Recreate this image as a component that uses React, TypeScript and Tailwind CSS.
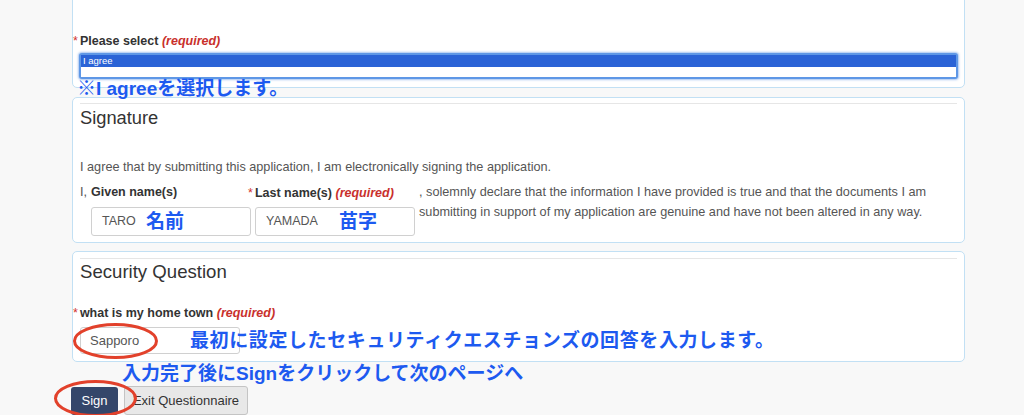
import React from "react";

const FONT = { fontFamily: '"Liberation Sans", Arial, "Noto Sans CJK JP", sans-serif' };
const JP = { fontFamily: '"Liberation Sans", Arial, "Noto Sans CJK JP", sans-serif' };

function Req({ text }: { text: string }) {
  return (
    <span className="text-[12.5px] leading-[16px] font-bold text-[#333]">
      <span className="-ml-[7px] mr-[2px] text-[#d2322d] font-normal">*</span>
      {text} <span className="italic text-[#c9302c]">(required)</span>
    </span>
  );
}

function Panel({ className, children }: { className: string; children: React.ReactNode }) {
  return (
    <div className={"border border-[#c2e0f4] rounded-[5px] bg-white px-[7px] " + className}>{children}</div>
  );
}

export default function App() {
  return (
    <div className="relative w-[1024px] h-[415px] overflow-hidden bg-[#f8f8f8]" style={FONT}>
      <div className="ml-[72px] w-[893px] flex flex-col">
        {/* Panel 1 */}
        <Panel className="-mt-[10px] pt-[41px] pb-[8px]">
          <div className="leading-[16px]">
            <Req text="Please select" />
          </div>
          <div className="mt-[4px] -ml-px -mr-px h-[26px] rounded-[3px] border-2 border-[#5e97e6] shadow-[0_0_2px_1px_rgba(80,140,230,0.5)] bg-white flex flex-col">
            <div className="h-[12px] bg-[#2a63d6] text-white text-[9.5px] leading-[12px] pl-[2px]">I agree</div>
            <div className="h-[10px] bg-white" />
          </div>
        </Panel>

        {/* Panel 2 */}
        <Panel className="mt-[9px] pt-[5px] pb-[6px]">
          <div className="h-px bg-[#e6e6e6]" />
          <div className="mt-[3px] text-[18.3px] leading-[22px] text-[#333]">Signature</div>
          <div className="mt-[30px] text-[12.7px] leading-[16px] text-[#555]">
            I agree that by submitting this application, I am electronically signing the application.
          </div>
          <div className="mt-[7px] flex items-start">
            <div className="w-[11px] text-[12.7px] leading-[20px] text-[#555]">I,</div>
            <div className="w-[160px] flex flex-col">
              <div className="text-[12.5px] leading-[20px] font-bold text-[#333]">Given name(s)</div>
              <div className="mt-[5px] h-[29px] border border-[#d0d0d0] rounded-[3px] pl-[10px] flex items-center text-[12.5px] text-[#555]">
                TARO
              </div>
            </div>
            <div className="ml-[4px] w-[160px] flex flex-col">
              <div className="leading-[20px]">
                <Req text="Last name(s)" />
              </div>
              <div className="mt-[5px] h-[29px] border border-[#d0d0d0] rounded-[3px] pl-[10px] flex items-center text-[12.5px] text-[#555]">
                YAMADA
              </div>
            </div>
            <div className="ml-[4px] text-[12.7px] leading-[20px] text-[#555] whitespace-nowrap">
              , solemnly declare that the information I have provided is true and that the documents I am
              <br />
              submitting in support of my application are genuine and have not been altered in any way.
            </div>
          </div>
        </Panel>

        {/* Panel 3 */}
        <Panel className="mt-[8px] pt-[6px] pb-[7px]">
          <div className="h-px bg-[#e6e6e6]" />
          <div className="mt-[2px] text-[18.6px] leading-[22px] text-[#333]">Security Question</div>
          <div className="mt-[21px] leading-[16px]">
            <Req text="what is my home town" />
          </div>
          <div className="mt-[6px] w-[160px] h-[27px] border border-[#d0d0d0] rounded-[3px] pl-[9px] flex items-center text-[13px] text-[#555]">
            Sapporo
          </div>
        </Panel>

        {/* Buttons */}
        <div className="mt-[24px] flex items-start">
          <button className="-ml-[1px] mt-px w-[47px] h-[28px] rounded-[3px] bg-[#34466a] text-white text-[13px]">
            Sign
          </button>
          <button className="ml-[6px] w-[124px] h-[29px] rounded-[3px] bg-[#e8e8e8] border border-[#c4c4c4] text-[#333] text-[13px]">
            Exit Questionnaire
          </button>
        </div>
      </div>

      {/* Annotations */}
      <div className="absolute left-[77px] top-[79px] text-[19px] leading-none font-bold text-[#1d5af0] whitespace-nowrap" style={JP}>
        ※I agreeを選択します。
      </div>
      <div className="absolute left-[146px] top-[212px] text-[19px] leading-none font-bold text-[#1d5af0] whitespace-nowrap" style={JP}>
        名前
      </div>
      <div className="absolute left-[339px] top-[212px] text-[19px] leading-none font-bold text-[#1d5af0] whitespace-nowrap" style={JP}>
        苗字
      </div>
      <div className="absolute left-[190px] top-[331px] text-[19px] tracking-[0.6px] leading-none font-bold text-[#1d5af0] whitespace-nowrap" style={JP}>
        最初に設定したセキュリティクエスチョンズの回答を入力します。
      </div>
      <div className="absolute left-[122px] top-[364px] text-[19px] leading-none font-bold text-[#1d5af0] whitespace-nowrap" style={JP}>
        入力完了後にSignをクリックして次のページへ
      </div>

      <svg className="absolute left-0 top-0 pointer-events-none" width="1024" height="415" viewBox="0 0 1024 415">
        <ellipse cx="115.5" cy="341" rx="41" ry="16.5" fill="none" stroke="#e2412b" strokeWidth="3" />
        <ellipse cx="95.5" cy="398.5" rx="40" ry="17" fill="none" stroke="#e2412b" strokeWidth="3" />
      </svg>
    </div>
  );
}
